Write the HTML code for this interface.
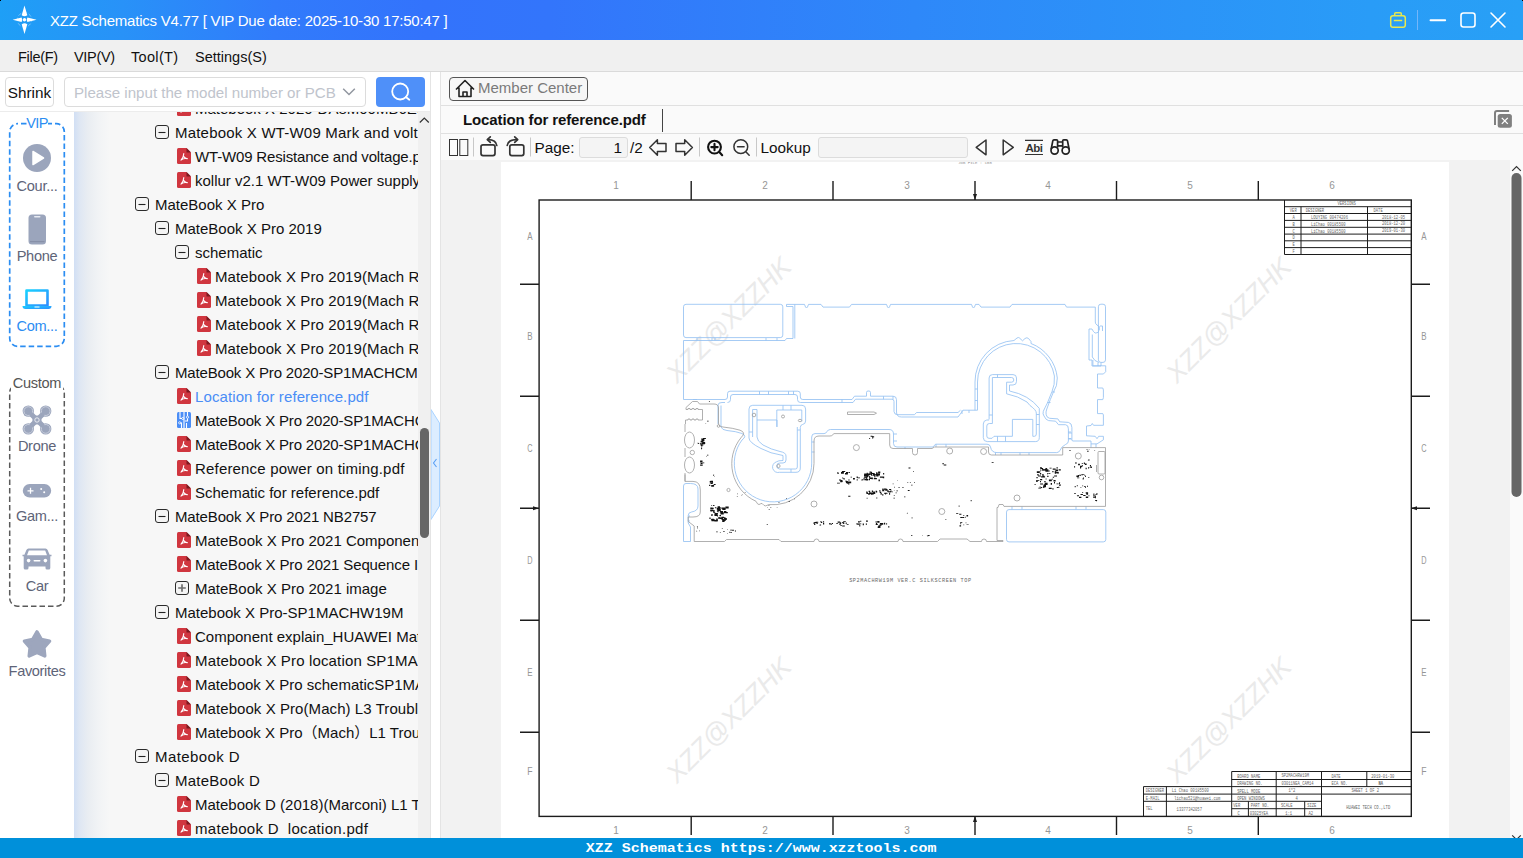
<!DOCTYPE html>
<html lang="en">
<head>
<meta charset="utf-8">
<title>XZZ Schematics</title>
<style>
*{box-sizing:border-box;margin:0;padding:0}
html,body{width:1523px;height:858px;overflow:hidden;background:#f0f0f0}
body{font-family:"Liberation Sans","Noto Sans CJK SC",sans-serif;color:#111;position:relative}
.abs{position:absolute}
#title{position:absolute;left:0;top:0;width:1523px;height:40px;background:linear-gradient(90deg,#1e9ff6 0%,#2892f8 8%,#317bfb 18%,#3373fc 28%,#3375fb 36%,#2e88f9 60%,#299cf7 90%,#28a0f6 100%)}
#title .cap{position:absolute;left:50px;top:11.500px;letter-spacing:-.23px;font-size:15px;color:#fff;white-space:nowrap;line-height:18px}
#menu{position:absolute;left:0;top:40px;width:1523px;height:32px;background:#f0f0f0;border-bottom:1px solid #dadada}
#menu span{position:absolute;top:8px;font-size:14.5px;line-height:18px;color:#111;white-space:nowrap}
#left{position:absolute;left:0;top:72px;width:430px;height:766px;background:#fff}
#lbar{position:absolute;left:0;top:0;width:430px;height:40px;background:#fff;border-bottom:1px solid #ececec}
#shrink{position:absolute;left:5px;top:5px;width:49px;height:30px;border:1px solid #dcdcdc;border-radius:4px;background:#fff;font-size:15.3px;line-height:30px;text-align:center;color:#111}
#inp{position:absolute;left:64px;top:5px;width:302px;height:30px;border:1px solid #dcdcdc;border-radius:4px;background:#fff;font-size:15.1px;line-height:30px;color:#c0c4cc;padding-left:9px;white-space:nowrap;overflow:hidden}
#sbtn{position:absolute;left:376px;top:5px;width:49px;height:30px;border-radius:4px;background:#4f90f9}
#side{position:absolute;left:0;top:40px;width:74px;height:726px;background:#fff}
.grp{position:absolute;left:9px;width:56px;border-radius:9px}
.sl{position:absolute;left:0;width:74px;text-align:center;font-size:14.600px;line-height:18px;color:#5e6478;white-space:nowrap;letter-spacing:-.3px}
#tree{position:absolute;left:74px;top:40px;width:344px;height:726px;overflow:hidden;background:linear-gradient(90deg,#d1dff4 0px,#dfe7f3 6px,#e9edf2 14px,#f1f3f5 24px,#f7f7f7 36px)}
.row{position:absolute;left:0;width:344px;height:24px;white-space:nowrap}
.row .i{position:absolute;line-height:0}
.row .t{position:absolute;top:4px;font-size:15px;line-height:18px;color:#111;white-space:nowrap}
.row.sel .t{color:#4a8df6}
#tsb{position:absolute;left:418px;top:40px;width:12px;height:726px;background:#f0f0f0}
#split{position:absolute;z-index:2;left:430px;top:72px;width:11px;height:766px;background:#fff;border-left:1px solid #e4e4e4;border-right:1px solid #e4e4e4}
#right{position:absolute;left:440px;top:72px;width:1083px;height:766px;background:#fafafa}
#mc{position:absolute;left:0;top:0;width:1083px;height:34px;background:#fafafa;border-bottom:1px solid #e0e0e0}
#mcb{position:absolute;left:9px;top:5px;width:139px;height:24px;border:1px solid #555;border-radius:4px;background:#f6f6f6}
#mcb span{position:absolute;left:28px;top:.500px;font-size:15px;line-height:18px;color:#7a7a7a;white-space:nowrap}
#tabs{position:absolute;left:0;top:34px;width:1083px;height:28px;background:#fafafa;border-bottom:1px solid #e0e0e0}
#tabs .tt{position:absolute;left:23px;top:4px;letter-spacing:-.12px;font-size:15px;line-height:19px;font-weight:bold;color:#111;white-space:nowrap}
#tb{position:absolute;left:0;top:62px;width:1083px;height:26px;background:#fafafa}
#tb .tx{position:absolute;top:5px;font-size:15.3px;line-height:18px;color:#111;white-space:nowrap}
#tb .sep{position:absolute;top:3px;width:1px;height:20px;background:#cfcfcf}
#tb .box{position:absolute;border:1px solid #dcdcdc;border-radius:3px;background:#f4f4f4}
#doc{position:absolute;left:0;top:88px;width:1083px;height:678px;background:#f2f2f2;overflow:hidden}
#page{position:absolute;left:61px;top:2px;width:948px;height:676px;background:#fff}
#dsb{position:absolute;left:1070px;top:0;width:13px;height:678px;background:#fafafa}
#status{position:absolute;left:0;top:838px;width:1523px;height:20px;background:#0090da;color:#fff;font-family:"Liberation Mono",monospace;font-weight:bold;font-size:13.7px;line-height:22.400px;overflow:hidden;text-align:center;white-space:nowrap}
#status span{display:inline-block;transform:scaleX(1.095);transform-origin:50% 50%}
</style>
</head>
<body>
<div id="title">
<svg class="abs" style="left:11px;top:5px" width="28" height="30" viewBox="0 0 28 30"><g fill="#fff"><path d="M13.500 .600L16.300 10.300Q13.500 12.400 10.700 10.300Z"/><path d="M13.500 29L16.300 19.300Q13.500 17.200 10.700 19.300Z"/><path d="M1.600 14.800L10.600 12.600Q11.900 14.800 10.600 17Z"/><path d="M25.600 14.800L16.400 12.600Q15.100 14.800 16.400 17Z"/><circle cx="13.500" cy="14.800" r="1.700"/></g><circle cx="13.500" cy="14.800" r="7.200" fill="none" stroke="#fff" stroke-opacity=".4" stroke-width=".9" stroke-dasharray="3.500 2.200" stroke-dashoffset="1.700"/></svg>
<div class="cap">XZZ Schematics V4.77 [ VIP Due date: 2025-10-30 17:50:47 ]</div>
<svg class="abs" style="left:1385px;top:8px" width="130" height="24" viewBox="0 0 130 24"><g fill="none" stroke="#e8e84e" stroke-width="1.500"><rect x="5.700" y="7.700" width="14.600" height="11.600" rx="2.300"/><path d="M9.700 7.700V5.800Q9.700 4.800 10.700 4.800H15.300Q16.300 4.800 16.300 5.800V7.700M8.800 12.500H17.200"/></g><path d="M32.500 2V22" stroke="#74b6fa" stroke-width="1"/><g fill="none" stroke="#fff" stroke-width="1.6" stroke-linecap="round"><path d="M45.500 12.200H60.200" stroke-width="1.900"/><rect x="76" y="5" width="14" height="14" rx="2.5"/><path d="M106 5L120 19M120 5L106 19"/></g></svg>
</div>
<div id="menu"><span style="left:18px;letter-spacing:-.3px">File(F)</span><span style="left:74px;letter-spacing:-.33px">VIP(V)</span><span style="left:131px;letter-spacing:.33px">Tool(T)</span><span style="left:195px">Settings(S)</span></div>

<div id="left">
<div id="lbar">
<div id="shrink">Shrink</div>
<div id="inp">Please input the model number or PCB
<svg class="abs" style="left:277px;top:9px" width="14" height="10" viewBox="0 0 14 10"><path d="M1.200 1.800L7 7.500L12.800 1.800" fill="none" stroke="#9297a0" stroke-width="1.500"/></svg></div>
<div id="sbtn"><svg class="abs" style="left:12px;top:3px" width="26" height="24" viewBox="0 0 26 24"><circle cx="12.200" cy="11.500" r="8" fill="none" stroke="#fff" stroke-width="1.800"/><path d="M17.800 17L21.300 19.800" stroke="#fff" stroke-width="1.800" stroke-linecap="round"/></svg></div>
</div>
<div id="side">
<svg class="abs" style="left:8px;top:10px" width="58" height="226" viewBox="0 0 58 226"><rect x="1.7" y="1.7" width="54.6" height="222.600" rx="8" fill="none" stroke="#2b8df2" stroke-width="1.700" stroke-dasharray="5.500 3" stroke-dashoffset="-3.300"/></svg>
<div class="abs" style="left:27px;top:2px;width:20.500px;height:18px;background:#fff"></div>
<div class="sl" style="top:2px;color:#2b8df2;font-size:14.5px;letter-spacing:-.6px">VIP</div>
<svg class="abs" style="left:22px;top:31px" width="30" height="30" viewBox="0 0 30 30"><circle cx="15" cy="15" r="14" fill="#9ba5bc"/><path d="M11 8.5L21.5 15L11 21.5Z" fill="#fff" stroke="#fff" stroke-width="1.5" stroke-linejoin="round"/></svg>
<div class="sl" style="top:65px">Cour...</div>
<svg class="abs" style="left:28px;top:102px" width="19" height="32" viewBox="0 0 19 32"><rect x=".5" y=".5" width="17.5" height="30" rx="3.5" fill="#9ba5bc"/><rect x="6" y="2" width="6.5" height="1.6" rx=".8" fill="#e8ebf2"/><rect x="2" y="27" width="14.5" height="1.2" fill="#8790a8"/></svg>
<div class="sl" style="top:135px">Phone</div>
<svg class="abs" style="left:21px;top:175px" width="32" height="24" viewBox="0 0 32 24"><defs><linearGradient id="lg" x1="0" y1="0" x2="1" y2="1"><stop offset="0" stop-color="#18d0ff"/><stop offset="1" stop-color="#2f8dff"/></linearGradient></defs><path d="M5.5 3.5H26.5V18.5H5.5Z" fill="none" stroke="url(#lg)" stroke-width="2.6" stroke-linejoin="round"/><path d="M1.5 19H30.5Q30.5 22 27.5 22H4.5Q1.5 22 1.5 19Z" fill="url(#lg)"/><rect x="13.5" y="19.5" width="5" height="1" fill="#fff"/></svg>
<div class="sl" style="top:205px;color:#2b8df2">Com...</div>

<svg class="abs" style="left:8px;top:271px" width="58" height="225" viewBox="0 0 58 225"><rect x="1.7" y="1.7" width="54.6" height="221.600" rx="8" fill="none" stroke="#5a5a5a" stroke-width="1.5" stroke-dasharray="5.500 3"/></svg>
<div class="abs" style="left:11px;top:262px;width:52px;height:18px;background:#fff"></div>
<div class="sl" style="top:262px;color:#555">Custom</div>
<svg class="abs" style="left:21px;top:291.500px" width="32" height="32" viewBox="0 0 32 32"><g fill="#9ba5bc"><path d="M7.500 7.500L24.500 24.500M24.500 7.500L7.500 24.500" stroke="#9ba5bc" stroke-width="5" stroke-linecap="round"/><circle cx="16" cy="16" r="4.600"/><circle cx="7.300" cy="7.100" r="5.700"/><circle cx="24.700" cy="7.100" r="5.700"/><circle cx="7.300" cy="24.900" r="5.700"/><circle cx="24.700" cy="24.900" r="5.700"/></g><g fill="none" stroke="#cdd3e0" stroke-width=".9"><circle cx="16" cy="16" r="2.200" stroke="#eef0f5"/><path d="M11.500 8.500A4.400 4.400 0 1 0 8.700 11.300M20.500 8.500A4.400 4.400 0 1 1 23.300 11.300M11.500 23.500A4.400 4.400 0 1 1 8.700 20.700M20.500 23.500A4.400 4.400 0 1 0 23.300 20.700"/></g></svg>
<div class="sl" style="top:325px">Drone</div>
<svg class="abs" style="left:22px;top:371px" width="30" height="16" viewBox="0 0 30 16"><rect x=".8" y="1" width="28.4" height="13.6" rx="6.8" fill="#9ba5bc"/><path d="M5.5 7.8H11.5M8.5 4.8V10.8" stroke="#fff" stroke-width="1.3"/><circle cx="19.2" cy="6" r="1" fill="#fff"/><circle cx="22.2" cy="9.2" r="1" fill="#fff"/></svg>
<div class="sl" style="top:395px">Gam...</div>
<svg class="abs" style="left:22px;top:435px" width="30" height="24" viewBox="0 0 30 24"><path d="M6.5 1.5H23.5Q25 1.5 25.6 3L27.6 7.8H29.5V9.2H28.3V21Q28.3 22.6 26.8 22.6H25Q23.5 22.6 23.5 21V19.4H6.5V21Q6.5 22.6 5 22.6H3.2Q1.7 22.6 1.7 21V9.2H.5V7.8H2.4L4.4 3Q5 1.5 6.5 1.5Z" fill="#9ba5bc"/><path d="M6.8 3.6H23.2L25 8.2H5Z" fill="#fff"/><circle cx="6.6" cy="13.6" r="1.8" fill="#fff"/><circle cx="23.4" cy="13.6" r="1.8" fill="#fff"/><rect x="11.5" y="13" width="7" height="1.6" rx=".8" fill="#fff"/></svg>
<div class="sl" style="top:465px">Car</div>
<svg class="abs" style="left:21px;top:516px" width="32" height="32" viewBox="0 0 32 32"><path d="M16.0 3.9L20.3 11.3L28.6 13.1L22.9 19.5L23.8 28.0L16.0 24.5L8.2 28.0L9.1 19.5L3.4 13.1L11.7 11.3Z" fill="#9da6bd" stroke="#9da6bd" stroke-width="3.400" stroke-linejoin="round"/></svg>
<div class="sl" style="top:550px;letter-spacing:-.35px">Favorites</div>

</div>
<div id="tree">
<div class="row " style="top:-16px"><span class="i" style="left:103px;top:4px"><svg class="ic" width="14" height="16" viewBox="0 0 14 16"><path d="M1.5 0H9.5L14 4.5V14.5Q14 16 12.5 16H1.5Q0 16 0 14.5V1.5Q0 0 1.5 0Z" fill="#d0363f"/><path d="M9.5 0L14 4.5H9.5Z" fill="#7c1a20"/><path d="M4 12.2C5.6 10.6 6.6 8.4 6.8 5.6M6.8 8.6C7.6 9.8 8.8 10.6 10.4 10.8M4.2 11.9C6 10.7 8 10.2 10.2 10.6" stroke="#fff" stroke-width="1.1" fill="none" stroke-linecap="round"/></svg></span><span class="t" style="left:121px">Matebook X 2020-DA8M00MB6E0 L1</span></div>
<div class="row " style="top:8px"><span class="i" style="left:81px;top:5px"><svg class="ex" width="14" height="14" viewBox="0 0 14 14"><rect x=".5" y=".5" width="13" height="13" rx="2.5" fill="#f4f4f4" stroke="#2b2b2b"/><path d="M3.500 7.500H10.500" stroke="#222" stroke-width="1.100"/></svg></span><span class="t" style="left:101px;letter-spacing:0.2px">Matebook X WT-W09 Mark and voltage</span></div>
<div class="row " style="top:32px"><span class="i" style="left:103px;top:4px"><svg class="ic" width="14" height="16" viewBox="0 0 14 16"><path d="M1.5 0H9.5L14 4.5V14.5Q14 16 12.5 16H1.5Q0 16 0 14.5V1.5Q0 0 1.5 0Z" fill="#d0363f"/><path d="M9.5 0L14 4.5H9.5Z" fill="#7c1a20"/><path d="M4 12.2C5.6 10.6 6.6 8.4 6.8 5.6M6.8 8.6C7.6 9.8 8.8 10.6 10.4 10.8M4.2 11.9C6 10.7 8 10.2 10.2 10.6" stroke="#fff" stroke-width="1.1" fill="none" stroke-linecap="round"/></svg></span><span class="t" style="left:121px;letter-spacing:-0.17px">WT-W09 Resistance and voltage.pdf</span></div>
<div class="row " style="top:56px"><span class="i" style="left:103px;top:4px"><svg class="ic" width="14" height="16" viewBox="0 0 14 16"><path d="M1.5 0H9.5L14 4.5V14.5Q14 16 12.5 16H1.5Q0 16 0 14.5V1.5Q0 0 1.5 0Z" fill="#d0363f"/><path d="M9.5 0L14 4.5H9.5Z" fill="#7c1a20"/><path d="M4 12.2C5.6 10.6 6.6 8.4 6.8 5.6M6.8 8.6C7.6 9.8 8.8 10.6 10.4 10.8M4.2 11.9C6 10.7 8 10.2 10.2 10.6" stroke="#fff" stroke-width="1.1" fill="none" stroke-linecap="round"/></svg></span><span class="t" style="left:121px">kollur v2.1 WT-W09 Power supply timing</span></div>
<div class="row " style="top:80px"><span class="i" style="left:61px;top:5px"><svg class="ex" width="14" height="14" viewBox="0 0 14 14"><rect x=".5" y=".5" width="13" height="13" rx="2.5" fill="#f4f4f4" stroke="#2b2b2b"/><path d="M3.500 7.500H10.500" stroke="#222" stroke-width="1.100"/></svg></span><span class="t" style="left:81px">MateBook X Pro</span></div>
<div class="row " style="top:104px"><span class="i" style="left:81px;top:5px"><svg class="ex" width="14" height="14" viewBox="0 0 14 14"><rect x=".5" y=".5" width="13" height="13" rx="2.5" fill="#f4f4f4" stroke="#2b2b2b"/><path d="M3.500 7.500H10.500" stroke="#222" stroke-width="1.100"/></svg></span><span class="t" style="left:101px">MateBook X Pro 2019</span></div>
<div class="row " style="top:128px"><span class="i" style="left:101px;top:5px"><svg class="ex" width="14" height="14" viewBox="0 0 14 14"><rect x=".5" y=".5" width="13" height="13" rx="2.5" fill="#f4f4f4" stroke="#2b2b2b"/><path d="M3.500 7.500H10.500" stroke="#222" stroke-width="1.100"/></svg></span><span class="t" style="left:121px">schematic</span></div>
<div class="row " style="top:152px"><span class="i" style="left:123px;top:4px"><svg class="ic" width="14" height="16" viewBox="0 0 14 16"><path d="M1.5 0H9.5L14 4.5V14.5Q14 16 12.5 16H1.5Q0 16 0 14.5V1.5Q0 0 1.5 0Z" fill="#d0363f"/><path d="M9.5 0L14 4.5H9.5Z" fill="#7c1a20"/><path d="M4 12.2C5.6 10.6 6.6 8.4 6.8 5.6M6.8 8.6C7.6 9.8 8.8 10.6 10.4 10.8M4.2 11.9C6 10.7 8 10.2 10.2 10.6" stroke="#fff" stroke-width="1.1" fill="none" stroke-linecap="round"/></svg></span><span class="t" style="left:141px;letter-spacing:0.1px">Matebook X Pro 2019(Mach R) L1</span></div>
<div class="row " style="top:176px"><span class="i" style="left:123px;top:4px"><svg class="ic" width="14" height="16" viewBox="0 0 14 16"><path d="M1.5 0H9.5L14 4.5V14.5Q14 16 12.5 16H1.5Q0 16 0 14.5V1.5Q0 0 1.5 0Z" fill="#d0363f"/><path d="M9.5 0L14 4.5H9.5Z" fill="#7c1a20"/><path d="M4 12.2C5.6 10.6 6.6 8.4 6.8 5.6M6.8 8.6C7.6 9.8 8.8 10.6 10.4 10.8M4.2 11.9C6 10.7 8 10.2 10.2 10.6" stroke="#fff" stroke-width="1.1" fill="none" stroke-linecap="round"/></svg></span><span class="t" style="left:141px;letter-spacing:0.1px">Matebook X Pro 2019(Mach R) L2</span></div>
<div class="row " style="top:200px"><span class="i" style="left:123px;top:4px"><svg class="ic" width="14" height="16" viewBox="0 0 14 16"><path d="M1.5 0H9.5L14 4.5V14.5Q14 16 12.5 16H1.5Q0 16 0 14.5V1.5Q0 0 1.5 0Z" fill="#d0363f"/><path d="M9.5 0L14 4.5H9.5Z" fill="#7c1a20"/><path d="M4 12.2C5.6 10.6 6.6 8.4 6.8 5.6M6.8 8.6C7.6 9.8 8.8 10.6 10.4 10.8M4.2 11.9C6 10.7 8 10.2 10.2 10.6" stroke="#fff" stroke-width="1.1" fill="none" stroke-linecap="round"/></svg></span><span class="t" style="left:141px;letter-spacing:0.1px">Matebook X Pro 2019(Mach R) L3</span></div>
<div class="row " style="top:224px"><span class="i" style="left:123px;top:4px"><svg class="ic" width="14" height="16" viewBox="0 0 14 16"><path d="M1.5 0H9.5L14 4.5V14.5Q14 16 12.5 16H1.5Q0 16 0 14.5V1.5Q0 0 1.5 0Z" fill="#d0363f"/><path d="M9.5 0L14 4.5H9.5Z" fill="#7c1a20"/><path d="M4 12.2C5.6 10.6 6.6 8.4 6.8 5.6M6.8 8.6C7.6 9.8 8.8 10.6 10.4 10.8M4.2 11.9C6 10.7 8 10.2 10.2 10.6" stroke="#fff" stroke-width="1.1" fill="none" stroke-linecap="round"/></svg></span><span class="t" style="left:141px;letter-spacing:0.1px">Matebook X Pro 2019(Mach R) L4</span></div>
<div class="row " style="top:248px"><span class="i" style="left:81px;top:5px"><svg class="ex" width="14" height="14" viewBox="0 0 14 14"><rect x=".5" y=".5" width="13" height="13" rx="2.5" fill="#f4f4f4" stroke="#2b2b2b"/><path d="M3.500 7.500H10.500" stroke="#222" stroke-width="1.100"/></svg></span><span class="t" style="left:101px;letter-spacing:-0.17px">MateBook X Pro 2020-SP1MACHCM</span></div>
<div class="row sel" style="top:272px"><span class="i" style="left:103px;top:4px"><svg class="ic" width="14" height="16" viewBox="0 0 14 16"><path d="M1.5 0H9.5L14 4.5V14.5Q14 16 12.5 16H1.5Q0 16 0 14.5V1.5Q0 0 1.5 0Z" fill="#d0363f"/><path d="M9.5 0L14 4.5H9.5Z" fill="#7c1a20"/><path d="M4 12.2C5.6 10.6 6.6 8.4 6.8 5.6M6.8 8.6C7.6 9.8 8.8 10.6 10.4 10.8M4.2 11.9C6 10.7 8 10.2 10.2 10.6" stroke="#fff" stroke-width="1.1" fill="none" stroke-linecap="round"/></svg></span><span class="t" style="left:121px;letter-spacing:0.1px">Location for reference.pdf</span></div>
<div class="row " style="top:296px"><span class="i" style="left:103px;top:4px"><svg class="ic" width="14" height="16" viewBox="0 0 14 16"><rect width="14" height="16" rx="1.5" fill="#4a8df6"/><path d="M3 0V6.5H5M7 0V16M10.5 0V4M10.5 6.5V9H8M4.5 16V11H3.5M9.5 16V11" stroke="#fff" stroke-width="1.1" fill="none"/><circle cx="10.5" cy="5.2" r="1.1" fill="none" stroke="#fff" stroke-width=".8"/><circle cx="5.8" cy="6.5" r="1.1" fill="none" stroke="#fff" stroke-width=".8"/><circle cx="2.7" cy="10.8" r="1.1" fill="none" stroke="#fff" stroke-width=".8"/></svg></span><span class="t" style="left:121px;letter-spacing:-0.17px">MateBook X Pro 2020-SP1MACHCM</span></div>
<div class="row " style="top:320px"><span class="i" style="left:103px;top:4px"><svg class="ic" width="14" height="16" viewBox="0 0 14 16"><path d="M1.5 0H9.5L14 4.5V14.5Q14 16 12.5 16H1.5Q0 16 0 14.5V1.5Q0 0 1.5 0Z" fill="#d0363f"/><path d="M9.5 0L14 4.5H9.5Z" fill="#7c1a20"/><path d="M4 12.2C5.6 10.6 6.6 8.4 6.8 5.6M6.8 8.6C7.6 9.8 8.8 10.6 10.4 10.8M4.2 11.9C6 10.7 8 10.2 10.2 10.6" stroke="#fff" stroke-width="1.1" fill="none" stroke-linecap="round"/></svg></span><span class="t" style="left:121px;letter-spacing:-0.17px">MateBook X Pro 2020-SP1MACHCM</span></div>
<div class="row " style="top:344px"><span class="i" style="left:103px;top:4px"><svg class="ic" width="14" height="16" viewBox="0 0 14 16"><path d="M1.5 0H9.5L14 4.5V14.5Q14 16 12.5 16H1.5Q0 16 0 14.5V1.5Q0 0 1.5 0Z" fill="#d0363f"/><path d="M9.5 0L14 4.5H9.5Z" fill="#7c1a20"/><path d="M4 12.2C5.6 10.6 6.6 8.4 6.8 5.6M6.8 8.6C7.6 9.8 8.8 10.6 10.4 10.8M4.2 11.9C6 10.7 8 10.2 10.2 10.6" stroke="#fff" stroke-width="1.1" fill="none" stroke-linecap="round"/></svg></span><span class="t" style="left:121px;letter-spacing:0.18px">Reference power on timing.pdf</span></div>
<div class="row " style="top:368px"><span class="i" style="left:103px;top:4px"><svg class="ic" width="14" height="16" viewBox="0 0 14 16"><path d="M1.5 0H9.5L14 4.5V14.5Q14 16 12.5 16H1.5Q0 16 0 14.5V1.5Q0 0 1.5 0Z" fill="#d0363f"/><path d="M9.5 0L14 4.5H9.5Z" fill="#7c1a20"/><path d="M4 12.2C5.6 10.6 6.6 8.4 6.8 5.6M6.8 8.6C7.6 9.8 8.8 10.6 10.4 10.8M4.2 11.9C6 10.7 8 10.2 10.2 10.6" stroke="#fff" stroke-width="1.1" fill="none" stroke-linecap="round"/></svg></span><span class="t" style="left:121px">Schematic for reference.pdf</span></div>
<div class="row " style="top:392px"><span class="i" style="left:81px;top:5px"><svg class="ex" width="14" height="14" viewBox="0 0 14 14"><rect x=".5" y=".5" width="13" height="13" rx="2.5" fill="#f4f4f4" stroke="#2b2b2b"/><path d="M3.500 7.500H10.500" stroke="#222" stroke-width="1.100"/></svg></span><span class="t" style="left:101px;letter-spacing:-0.14px">MateBook X Pro 2021 NB2757</span></div>
<div class="row " style="top:416px"><span class="i" style="left:103px;top:4px"><svg class="ic" width="14" height="16" viewBox="0 0 14 16"><path d="M1.5 0H9.5L14 4.5V14.5Q14 16 12.5 16H1.5Q0 16 0 14.5V1.5Q0 0 1.5 0Z" fill="#d0363f"/><path d="M9.5 0L14 4.5H9.5Z" fill="#7c1a20"/><path d="M4 12.2C5.6 10.6 6.6 8.4 6.8 5.6M6.8 8.6C7.6 9.8 8.8 10.6 10.4 10.8M4.2 11.9C6 10.7 8 10.2 10.2 10.6" stroke="#fff" stroke-width="1.1" fill="none" stroke-linecap="round"/></svg></span><span class="t" style="left:121px">MateBook X Pro 2021 Component</span></div>
<div class="row " style="top:440px"><span class="i" style="left:103px;top:4px"><svg class="ic" width="14" height="16" viewBox="0 0 14 16"><path d="M1.5 0H9.5L14 4.5V14.5Q14 16 12.5 16H1.5Q0 16 0 14.5V1.5Q0 0 1.5 0Z" fill="#d0363f"/><path d="M9.5 0L14 4.5H9.5Z" fill="#7c1a20"/><path d="M4 12.2C5.6 10.6 6.6 8.4 6.8 5.6M6.8 8.6C7.6 9.8 8.8 10.6 10.4 10.8M4.2 11.9C6 10.7 8 10.2 10.2 10.6" stroke="#fff" stroke-width="1.1" fill="none" stroke-linecap="round"/></svg></span><span class="t" style="left:121px;letter-spacing:-0.13px">MateBook X Pro 2021 Sequence IC</span></div>
<div class="row " style="top:464px"><span class="i" style="left:101px;top:5px"><svg class="ex" width="14" height="14" viewBox="0 0 14 14"><rect x=".5" y=".5" width="13" height="13" rx="2.5" fill="#f4f4f4" stroke="#2b2b2b"/><path d="M3.200 7H10.800M7 3.200V10.800" stroke="#6e6e6e" stroke-width="1.700"/></svg></span><span class="t" style="left:121px">MateBook X Pro 2021 image</span></div>
<div class="row " style="top:488px"><span class="i" style="left:81px;top:5px"><svg class="ex" width="14" height="14" viewBox="0 0 14 14"><rect x=".5" y=".5" width="13" height="13" rx="2.5" fill="#f4f4f4" stroke="#2b2b2b"/><path d="M3.500 7.500H10.500" stroke="#222" stroke-width="1.100"/></svg></span><span class="t" style="left:101px">Matebook X Pro-SP1MACHW19M</span></div>
<div class="row " style="top:512px"><span class="i" style="left:103px;top:4px"><svg class="ic" width="14" height="16" viewBox="0 0 14 16"><path d="M1.5 0H9.5L14 4.5V14.5Q14 16 12.5 16H1.5Q0 16 0 14.5V1.5Q0 0 1.5 0Z" fill="#d0363f"/><path d="M9.5 0L14 4.5H9.5Z" fill="#7c1a20"/><path d="M4 12.2C5.6 10.6 6.6 8.4 6.8 5.6M6.8 8.6C7.6 9.8 8.8 10.6 10.4 10.8M4.2 11.9C6 10.7 8 10.2 10.2 10.6" stroke="#fff" stroke-width="1.1" fill="none" stroke-linecap="round"/></svg></span><span class="t" style="left:121px">Component explain_HUAWEI Mate</span></div>
<div class="row " style="top:536px"><span class="i" style="left:103px;top:4px"><svg class="ic" width="14" height="16" viewBox="0 0 14 16"><path d="M1.5 0H9.5L14 4.5V14.5Q14 16 12.5 16H1.5Q0 16 0 14.5V1.5Q0 0 1.5 0Z" fill="#d0363f"/><path d="M9.5 0L14 4.5H9.5Z" fill="#7c1a20"/><path d="M4 12.2C5.6 10.6 6.6 8.4 6.8 5.6M6.8 8.6C7.6 9.8 8.8 10.6 10.4 10.8M4.2 11.9C6 10.7 8 10.2 10.2 10.6" stroke="#fff" stroke-width="1.1" fill="none" stroke-linecap="round"/></svg></span><span class="t" style="left:121px;letter-spacing:0.15px">Matebook X Pro location SP1MAC</span></div>
<div class="row " style="top:560px"><span class="i" style="left:103px;top:4px"><svg class="ic" width="14" height="16" viewBox="0 0 14 16"><path d="M1.5 0H9.5L14 4.5V14.5Q14 16 12.5 16H1.5Q0 16 0 14.5V1.5Q0 0 1.5 0Z" fill="#d0363f"/><path d="M9.5 0L14 4.5H9.5Z" fill="#7c1a20"/><path d="M4 12.2C5.6 10.6 6.6 8.4 6.8 5.6M6.8 8.6C7.6 9.8 8.8 10.6 10.4 10.8M4.2 11.9C6 10.7 8 10.2 10.2 10.6" stroke="#fff" stroke-width="1.1" fill="none" stroke-linecap="round"/></svg></span><span class="t" style="left:121px">Matebook X Pro schematicSP1MA</span></div>
<div class="row " style="top:584px"><span class="i" style="left:103px;top:4px"><svg class="ic" width="14" height="16" viewBox="0 0 14 16"><path d="M1.5 0H9.5L14 4.5V14.5Q14 16 12.5 16H1.5Q0 16 0 14.5V1.5Q0 0 1.5 0Z" fill="#d0363f"/><path d="M9.5 0L14 4.5H9.5Z" fill="#7c1a20"/><path d="M4 12.2C5.6 10.6 6.6 8.4 6.8 5.6M6.8 8.6C7.6 9.8 8.8 10.6 10.4 10.8M4.2 11.9C6 10.7 8 10.2 10.2 10.6" stroke="#fff" stroke-width="1.1" fill="none" stroke-linecap="round"/></svg></span><span class="t" style="left:121px;letter-spacing:0.07px">Matebook X Pro(Mach) L3 Trouble</span></div>
<div class="row " style="top:608px"><span class="i" style="left:103px;top:4px"><svg class="ic" width="14" height="16" viewBox="0 0 14 16"><path d="M1.5 0H9.5L14 4.5V14.5Q14 16 12.5 16H1.5Q0 16 0 14.5V1.5Q0 0 1.5 0Z" fill="#d0363f"/><path d="M9.5 0L14 4.5H9.5Z" fill="#7c1a20"/><path d="M4 12.2C5.6 10.6 6.6 8.4 6.8 5.6M6.8 8.6C7.6 9.8 8.8 10.6 10.4 10.8M4.2 11.9C6 10.7 8 10.2 10.2 10.6" stroke="#fff" stroke-width="1.1" fill="none" stroke-linecap="round"/></svg></span><span class="t" style="left:121px">Matebook X Pro（Mach）L1 Trou</span></div>
<div class="row " style="top:632px"><span class="i" style="left:61px;top:5px"><svg class="ex" width="14" height="14" viewBox="0 0 14 14"><rect x=".5" y=".5" width="13" height="13" rx="2.5" fill="#f4f4f4" stroke="#2b2b2b"/><path d="M3.500 7.500H10.500" stroke="#222" stroke-width="1.100"/></svg></span><span class="t" style="left:81px;letter-spacing:0.4px">Matebook D</span></div>
<div class="row " style="top:656px"><span class="i" style="left:81px;top:5px"><svg class="ex" width="14" height="14" viewBox="0 0 14 14"><rect x=".5" y=".5" width="13" height="13" rx="2.5" fill="#f4f4f4" stroke="#2b2b2b"/><path d="M3.500 7.500H10.500" stroke="#222" stroke-width="1.100"/></svg></span><span class="t" style="left:101px;letter-spacing:0.25px">MateBook D</span></div>
<div class="row " style="top:680px"><span class="i" style="left:103px;top:4px"><svg class="ic" width="14" height="16" viewBox="0 0 14 16"><path d="M1.5 0H9.5L14 4.5V14.5Q14 16 12.5 16H1.5Q0 16 0 14.5V1.5Q0 0 1.5 0Z" fill="#d0363f"/><path d="M9.5 0L14 4.5H9.5Z" fill="#7c1a20"/><path d="M4 12.2C5.6 10.6 6.6 8.4 6.8 5.6M6.8 8.6C7.6 9.8 8.8 10.6 10.4 10.8M4.2 11.9C6 10.7 8 10.2 10.2 10.6" stroke="#fff" stroke-width="1.1" fill="none" stroke-linecap="round"/></svg></span><span class="t" style="left:121px">Matebook D (2018)(Marconi) L1 T</span></div>
<div class="row " style="top:704px"><span class="i" style="left:103px;top:4px"><svg class="ic" width="14" height="16" viewBox="0 0 14 16"><path d="M1.5 0H9.5L14 4.5V14.5Q14 16 12.5 16H1.5Q0 16 0 14.5V1.5Q0 0 1.5 0Z" fill="#d0363f"/><path d="M9.5 0L14 4.5H9.5Z" fill="#7c1a20"/><path d="M4 12.2C5.6 10.6 6.6 8.4 6.8 5.6M6.8 8.6C7.6 9.8 8.8 10.6 10.4 10.8M4.2 11.9C6 10.7 8 10.2 10.2 10.6" stroke="#fff" stroke-width="1.1" fill="none" stroke-linecap="round"/></svg></span><span class="t" style="left:121px;letter-spacing:0.3px">matebook D  location.pdf</span></div>
</div>
<div id="tsb">
<svg class="abs" style="left:0;top:0" width="12" height="726" viewBox="0 0 12 726"><path d="M1.800 10.500L6.300 6L10.800 10.500" fill="none" stroke="#333" stroke-width="1.200"/><rect x="2" y="316" width="9" height="110" rx="4.500" fill="#666"/></svg>
</div>
</div>
<div id="split"><svg class="abs" style="left:0px;top:337px" width="9" height="112" viewBox="0 0 9 112"><path d="M0 .5L8.500 14V97L0 110.500Z" fill="#dcedff" stroke="#a9d3ff" stroke-width="1"/><path d="M5.500 50L2.500 54L5.500 58" fill="none" stroke="#5aa0f5" stroke-width="1.100"/></svg></div>

<div id="right">
<div id="mc"><div id="mcb"><svg class="abs" style="left:4px;top:0px" width="22" height="20" viewBox="0 0 22 20"><path d="M2 11.500L11 2.500L20 11.500M5 9.500V18.500H17V9.500M9 18.500V14H13V18.500" fill="none" stroke="#222" stroke-width="1.6" stroke-linejoin="round"/></svg><span>Member Center</span></div></div>
<div id="tabs"><div class="tt">Location for reference.pdf</div><div class="abs" style="left:221.5px;top:3px;width:1px;height:23px;background:#444"></div>
<svg class="abs" style="left:1052px;top:2px" width="24" height="24" viewBox="1492 108 24 24"><path d="M1495 125V113Q1495 111 1497 111H1509.100" fill="none" stroke="#808080" stroke-width="2"/><rect x="1497.700" y="114" width="14.200" height="13.800" rx="2.500" fill="#808080"/><path d="M1501.800 117.900L1507.800 123.900M1507.800 117.900L1501.800 123.900" stroke="#fff" stroke-width="1.300"/></svg></div>
<div id="tb">
<svg class="abs" style="left:0;top:0" width="1083" height="26" viewBox="440 134 1083 26">
<g fill="none" stroke="#333" stroke-width="1"><rect x="449.500" y="139.500" width="8" height="16"/><rect x="459.800" y="139.500" width="8" height="16"/></g>
<g stroke="#c8c8c8" stroke-width="1"><path d="M473.500 137.500V156.500M530.500 137.500V156.500M699.500 137.500V156.500M756.500 137.500V156.500"/></g>
<g fill="none" stroke="#333" stroke-width="1.7" stroke-linejoin="round" stroke-linecap="round">
<rect x="481" y="144.800" width="14" height="10.800" rx="2"/><path d="M496.800 145.500Q496 139.600 488 139.600"/><path d="M490.300 136.800L487.300 139.600L490.300 142.400"/>
<rect x="509.800" y="144.800" width="14" height="10.800" rx="2"/><path d="M507.200 145.500Q508 139.600 517 139.600"/><path d="M514.700 136.800L517.700 139.600L514.700 142.400"/>
</g>
<g fill="none" stroke="#333" stroke-width="1.5" stroke-linejoin="round">
<path d="M649.700 147.500L657.400 139.800V143.600H666V151.400H657.400V155.200Z"/>
<path d="M692.400 147.500L684.700 139.800V143.600H676V151.400H684.700V155.200Z"/>
<path d="M976.200 147.400L986 140V154.800Z"/><path d="M1013.300 147.400L1003.200 140V154.800Z"/>
</g>
<g fill="none" stroke="#111" stroke-width="2.100" stroke-linecap="round"><circle cx="714.500" cy="147.100" r="6.400"/><path d="M719.300 152L722.200 155.200M711.300 147.100H717.700M714.500 143.900V150.300"/></g>
<g fill="none" stroke="#333" stroke-width="1.500" stroke-linecap="round"><circle cx="740.800" cy="146.700" r="6.900"/><path d="M745.800 151.800L749.200 155.300M737.500 146.700H744.100"/></g>
<path d="M1025 140.400H1043M1025 154.500H1043" stroke="#333" stroke-width="1.100"/>
<text x="1033.900" y="151.700" font-family="Liberation Sans, sans-serif" font-size="11.500" font-weight="bold" fill="#333" text-anchor="middle" letter-spacing="-.5">Abi</text>
<g fill="none" stroke="#222" stroke-width="1.700" stroke-linejoin="round"><circle cx="1054.600" cy="150.500" r="3.600"/><circle cx="1065.700" cy="150.500" r="3.600"/><path d="M1051.100 149.500L1052.800 140.800Q1053 139.800 1054 139.800H1056.500Q1057.600 139.800 1057.600 140.800V147.500M1069.200 149.500L1067.500 140.800Q1067.300 139.800 1066.300 139.800H1063.800Q1062.700 139.800 1062.700 140.800V147.500M1057.600 142H1062.700M1057.600 145.800H1062.700"/></g>
</svg>
<div class="tx" style="left:94.500px">Page:</div>
<div class="box" style="left:138.500px;top:3px;width:49px;height:21px"></div>
<div class="tx" style="left:173.500px">1</div>
<div class="tx" style="left:190px">/2</div>
<div class="tx" style="left:320.500px">Lookup</div>
<div class="box" style="left:378px;top:3px;width:150px;height:21px"></div>

</div>
<div id="doc">
<div id="page">
<svg class="abs" style="left:0;top:0" width="948" height="676" viewBox="501 162 948 676" font-family="Liberation Mono, monospace">
<!-- watermarks -->
<g fill="#eaeaea" font-family="Liberation Sans, sans-serif" font-size="26.500" font-style="italic" text-anchor="middle">
<text transform="translate(735,326.300) rotate(-45)">XZZ@XZZHK</text>
<text transform="translate(1235,326.300) rotate(-45)">XZZ@XZZHK</text>
<text transform="translate(735,726.300) rotate(-45)">XZZ@XZZHK</text>
<text transform="translate(1235,726.300) rotate(-45)">XZZ@XZZHK</text>
</g>
<!-- frame -->
<g fill="none" stroke="#1c1c1c" stroke-width="1.4">
<rect x="539.1" y="200" width="872.2" height="616.4"/>
<path d="M691.2 181V200M833 181V200M975 181V200M1116.5 181V200M1258.3 181V200"/>
<path d="M691.2 816V835M833 816V835M975 816V835M1116.5 816V835M1258.3 816V835"/>
<path d="M520 284.2H539M520 396.2H539M520 508.2H539M520 620.2H539M520 732.2H539"/>
<path d="M1411 284.2H1430M1411 396.2H1430M1411 508.2H1430M1411 620.2H1430M1411 732.2H1430"/>
</g>
<g fill="#1c1c1c"><path d="M973 194L975 200L977 194Z"/><path d="M973 822L975 816L977 822Z"/><path d="M533 506.2L539 508.2L533 510.2Z"/><path d="M1417 506.2L1411 508.2L1417 510.2Z"/></g>
<g fill="#969696" font-family="Liberation Sans, sans-serif" font-size="10" text-anchor="middle">
<text x="616" y="189">1</text><text x="765" y="189">2</text><text x="907" y="189">3</text><text x="1048" y="189">4</text><text x="1190" y="189">5</text><text x="1332" y="189">6</text>
<text x="616" y="834">1</text><text x="765" y="834">2</text><text x="907" y="834">3</text><text x="1048" y="834">4</text><text x="1190" y="834">5</text><text x="1332" y="834">6</text>
<text x="530" y="240" textLength="5.300" lengthAdjust="spacingAndGlyphs">A</text><text x="530" y="340" textLength="5.300" lengthAdjust="spacingAndGlyphs">B</text><text x="530" y="452" textLength="5.300" lengthAdjust="spacingAndGlyphs">C</text><text x="530" y="564" textLength="5.300" lengthAdjust="spacingAndGlyphs">D</text><text x="530" y="676" textLength="5.300" lengthAdjust="spacingAndGlyphs">E</text><text x="530" y="775" textLength="5.300" lengthAdjust="spacingAndGlyphs">F</text>
<text x="1424" y="240" textLength="5.300" lengthAdjust="spacingAndGlyphs">A</text><text x="1424" y="340" textLength="5.300" lengthAdjust="spacingAndGlyphs">B</text><text x="1424" y="452" textLength="5.300" lengthAdjust="spacingAndGlyphs">C</text><text x="1424" y="564" textLength="5.300" lengthAdjust="spacingAndGlyphs">D</text><text x="1424" y="676" textLength="5.300" lengthAdjust="spacingAndGlyphs">E</text><text x="1424" y="775" textLength="5.300" lengthAdjust="spacingAndGlyphs">F</text>
</g>
<text x="975" y="164" font-size="4" fill="#999" text-anchor="middle">JOB FILE : 1B5</text>
<g fill="none" stroke="#96c2f2" stroke-width=".85" stroke-linejoin="round">
<rect x="683.5" y="304.3" width="99.3" height="33.3" rx="2.5"/>
<!-- top outline -->
<path d="M683.5 399.5V340.500H785L786.500 338.500H793V306.500H786.500V304.400H804.500L805.500 307Q806.500 309 807.500 307L808.500 304.400H821L823 307.100H849.500L851.500 304.400H886.500L887.500 307Q888.500 309 889.500 307L890.500 304.400H971.500L972.500 307Q973.500 309 974.500 307L975.500 304.400H979L981 307.100H1010L1012 304.400H1065L1066.500 307.100H1095.300V322Q1095.300 324 1097 325L1099 326.500V330"/>
<path d="M794.800 304.400V338.500M697 338V340.500M715 338V340.500M712 338V340.500M766 338V340.500M777 338V340.500"/>
<!-- right side pieces -->
<rect x="1098.400" y="304.200" width="7.100" height="58.200" rx="2.500"/>
<path d="M1099 326V330Q1099 333 1096 333H1095Q1093 331.500 1092 329H1089V360H1092V366H1101V362.500M1092.300 334.500V357L1095 360.500L1099 362.500M1100 326H1102.500V331M1098 362.500V366"/>
<path d="M1092.900 360V365.800H1105.700V371.700L1103.400 374H1097.500V388H1102.800L1103.400 390V397.500L1102.800 399.600H1097.500V413.600H1102.800L1103.400 415V425.300H1093.500L1092.300 423.500L1091 425.500L1086.500 426V435.800L1095.200 436.300L1097 438.700L1098.700 436.300H1103.400V439.800L1097 443.900H1091V447.600M1091 441V443.900M1096 443.900V447.600"/>
<!-- channel lower boundary of upper region -->
<path d="M683.500 399.500H725Q727.500 399.500 727.500 397V393.700Q727.500 391.200 730 391.200H797.800Q800.300 391.200 800.300 393.700V397Q800.300 399.500 802.800 399.500H852L854.500 396.200H866.500V392.500Q866.500 391 868 391H869Q870.500 391 870.500 392.500V396.200H893Q896.500 396.200 896.500 399.700V412Q896.500 417 901.500 417H958L961 413L963 410.200H977.500V382"/>
<path d="M693 399.500H697M727.500 402.500Q730.500 402.500 730.500 399.500V397Q730.500 394.500 733 394.500H795Q797.500 394.500 797.500 397V399.500Q797.500 402.500 800.500 402.500H853L855.500 399.200H892Q894 399.200 894 401.500V411.500Q894 414.700 898 414.700H914.500L916.500 412.500H958L960.500 410.200M759.500 391.200V394.500M768.500 391.200V394.500M788.500 391.200V394.500M793.500 391.200V394.500M842 399.500V402.500M883.500 396.200V399.200M893 396.200V399.200M962 410.200V414M969 410.200V413M975 389H977.500M975 400.500H977.500"/>
<path d="M725 402.500H722Q718 402.500 718 405V424M721 405.500V427"/>
<!-- big arc -->
<path d="M977.500 382A38.700 38.700 0 0 1 1054.400 376Q1055 385 1052 391.500L1047.400 403Q1045.300 407 1043.300 411.300Q1042.500 414 1044 416Q1046 420.200 1048.600 420.600L1055.600 421.200L1058.500 424.700H1065.500Q1068.400 425 1068.400 428.800V437"/>
<path d="M975 410.200V382A41.200 41.200 0 0 1 1014 340.500L1017 338Q1018.500 337 1019.500 338L1022.500 340.800L1025 338.500Q1027 337 1028.500 338.500L1031 341.500V343.500A41.200 41.200 0 0 1 1057.300 378Q1057.600 386 1053.200 392.600L1050.300 399.600L1046.800 409Q1045.500 412 1046.200 414.800Q1047 418 1049.700 418.300L1057.900 418.900L1059.700 421.800L1068.400 422.400Q1071.900 423 1071.900 427.600V437"/>
<path d="M1052 392H1055M1047.500 402.500H1050.500"/>
<!-- inner R shape -->
<path d="M989.100 419.400V378Q989.100 374.600 992.500 374.600H1013Q1016.500 374.600 1016.500 378V381.500Q1016.500 385 1013 385H1009.500V391Q1029 395 1039.300 408.400V437.500Q1039.300 441.600 1035.300 441.600H987.300Q983.300 441.600 983.300 437.600V424Q983.300 420.500 986.800 420H989.100"/>
<path d="M992.400 423.500V377.500H1011.500Q1013.800 377.500 1013.800 380Q1013.800 382.200 1011.500 382.200H1006.600V393.800Q1018 396 1027 402L1030 405.500Q1036.300 410 1036.300 413V434Q1036.300 436.300 1034.500 436.300H1032.800V419.400H1012.400V436.300H994L992 438.300H989Q986.800 438.300 986.800 436V426Q986.800 423.500 989.500 423.500H992.400"/>
<path d="M997.500 374.600V377.500M989.100 415H992.400M1036.300 414.500H1039.300M1036.300 424.500H1039.300M997.500 436.300V441.600M1005.500 436.300V441.600"/>
</g>
<g fill="none" stroke="#96c2f2" stroke-width=".85" stroke-linejoin="round">
<!-- fan inner arc + channel to the right -->
<path d="M721 427Q722 430 727 430.500Q736 431.300 742 433.500Q747.500 436 742 440A38.700 38.700 0 1 0 811.700 463.100V437Q811.700 433.600 815 433.600H824Q826 433.600 827 431.500Q828 429.500 830.500 429.500H889Q893.500 429.500 893.500 434V443.500Q893.500 447 897 447H933L935.500 444.200H987Q990 444.200 990.500 447Q991.500 452.600 997 452.600H1056.700Q1059 452.600 1060 450.300Q1061.500 446.500 1065.500 444.500Q1068.400 443.500 1068.400 441V437"/>
<path d="M811.700 442H814.500M811.700 452H814.500M893.500 434H897M893.500 441H897M905 447V449M936 444.200V447M946 444.200V447M995.500 452.600V455M1001 452.600V455M1020 452.600V455M1029 452.600V455M1068 432H1071M1068 438.500H1071"/>
<path d="M1071.900 437V440.400L1073 441H1091M1068.400 433H1071.900M1068.400 439H1071.900"/>
<!-- J pipe -->
<path d="M749 438V409Q749 405.300 752.700 405.300H802Q805.600 405.300 805.600 409V421Q805.600 424 802.500 424.500Q800.300 425 800.300 427.500V468Q800.300 472.300 796 472.300H779.500A5.300 5.300 0 0 1 776.500 461.800Q778 460.500 783 460.500V455.500Q770 453.500 761 448.500Q749 442.500 749 438Z"/>
<path d="M752.600 437V409.500H757V437Q757 441 763 445Q771 449.500 780 451.500Q786 452.500 786 456V460Q786 463 783 463H780A2.900 2.900 0 0 0 779.500 469H795.500Q797.300 469 797.300 467V427M757 420H777V427M776.800 426.800V410H801.800V421.500M783 405.300V410M791 405.300V410M749 432H752.600M791 469V472.300M797.300 430H800.300"/>
<!-- bottom-left blue -->
<path d="M690.500 483.500H686Q683.500 483.500 683.500 486V541.500H690.500V527L688.200 523V515.500Q688.200 512.500 691.500 512Q698 511 698 506V489Q698 483.500 690.500 483.500M688.200 516H690M688.200 521H690"/>
<!-- bottom-right rect -->
<rect x="1006.500" y="509.600" width="99.300" height="32.300" rx="2.500"/>
<path d="M1012 506.500V509.600M1022 506.500V509.600M1076 506.500V509.600M1086 506.500V509.600"/>
</g>
<g fill="none" stroke="#9c9c9c" stroke-width=".8" stroke-linejoin="round">
<!-- board outline -->
<path d="M692.500 401.500H697.500L699.500 404H714Q718.500 404 718.500 408V423Q718.500 426.500 723 427Q733 428 740 430.200Q746.500 432.500 741.300 437.300A41.300 41.300 0 0 0 756 501.300L757.500 503.800Q759 505.300 760.500 503.800L762 503.400L764 505.400Q765.500 506.400 767 505.400L768.500 504.600A41.300 41.300 0 0 0 814 463.500V441Q814 436 819 436H830Q832 436 833 434.500L834 433.600H889.700V445Q889.700 448.500 893 448.500H912.500V452.500Q912.500 455 915 455Q917.500 455 917.500 452.500V448.500H932L934.500 447H988.500V452Q988.500 455 991.500 455H1062.700V447.600H1105.500V506.400H1004L1003 504.500H999L998 507.500H997V540.500H1003V541.500H986.500A2.400 2.400 0 0 0 981.500 541.500H970L967 539H940L937.500 541.500H903A2.400 2.400 0 0 0 898 541.500H819A2.400 2.400 0 0 0 814 541.500H781L779 539.500H726.500L724.500 541.500H694.200V526L688.200 521.500V517H693Q700.300 517 700.300 512V490Q700.300 481.400 693 481.400H685V474.500"/>
<path d="M692.500 401.500L686 407.500V409.500H688V408.500H690V409.500H692V408.500H694V409.500H696V408.500H698V409.500H702.500V420H698V419H696V420H694V419H692V420H690V419H688V420H685.500V424"/>
<ellipse cx="689.500" cy="440" rx="5" ry="8"/><ellipse cx="689.500" cy="465" rx="5" ry="8"/>
<path d="M685 424V432M685 448V457M685 473V481.400"/>
<circle cx="692.300" cy="452.500" r="2.200"/><circle cx="856.400" cy="447.600" r="3"/><circle cx="814" cy="504" r="3"/><circle cx="949.700" cy="451" r="3"/><circle cx="983.600" cy="451.500" r="3"/><circle cx="1078.300" cy="456" r="3"/><circle cx="1017" cy="498" r="3"/><circle cx="941.800" cy="511.500" r="3"/><circle cx="1101.500" cy="477.500" r="2.300"/><circle cx="718.500" cy="426" r="1.300"/><circle cx="728.500" cy="490" r="1.600"/>
<rect x="1098" y="451.500" width="7" height="22.500" rx="1"/><path d="M1096.500 465V472"/>
<path d="M847.500 412H874L876.500 413.200L874 414.500H847.500Z"/>
<circle cx="754" cy="415" r="1.800"/><circle cx="783" cy="416.500" r="1.500"/><ellipse cx="800" cy="420.500" rx="1.700" ry="1.200"/><circle cx="778.500" cy="466" r="1.600"/>
</g>
<path fill="#111" d="M701.2 438.6h1.0v0.9h-1.0zM703.0 438.0h2.9v0.9h-2.9zM703.4 439.3h1.0v1.7h-1.0zM701.5 439.6h2.9v1.7h-2.9zM700.2 443.1h1.3v0.9h-1.3zM702.1 441.2h1.3v0.9h-1.3zM702.1 438.4h2.1v1.2h-2.1zM702.0 443.1h2.9v1.2h-2.9zM700.4 443.1h1.3v1.3h-1.3zM700.4 444.6h2.9v0.9h-2.9zM702.3 442.3h2.9v1.7h-2.9zM702.9 442.0h2.1v1.3h-2.1zM701.1 445.5h1.3v0.9h-1.3zM702.1 442.6h1.3v1.7h-1.3zM701.1 447.5h1.0v1.7h-1.0zM700.6 440.7h2.1v1.7h-2.1zM700.1 464.5h2.6v1.2h-2.6zM700.6 462.4h1.9v1.6h-1.9zM700.1 460.6h1.2v1.6h-1.2zM701.3 460.4h1.2v1.6h-1.2zM700.5 462.6h1.2v0.8h-1.2zM701.7 462.4h2.6v0.8h-2.6zM697.6 442.7h0.8v0.7h-0.8zM697.9 443.3h1.3v0.6h-1.3zM709.8 482.3h1.2v1.1h-1.2zM712.9 485.0h1.2v1.6h-1.2zM713.7 484.0h1.9v1.1h-1.9zM709.7 481.0h1.2v1.1h-1.2zM709.1 484.8h1.2v1.2h-1.2zM710.4 480.8h2.6v1.2h-2.6zM711.9 481.8h1.2v0.8h-1.2zM711.2 485.1h2.6v1.6h-2.6zM710.9 482.3h1.9v1.6h-1.9zM713.4 474.5h0.7v0.9h-0.7zM714.0 476.5h0.6v0.5h-0.6zM713.0 475.1h0.6v0.7h-0.6zM719.1 507.0h1.5v2.0h-1.5zM711.5 509.7h1.5v1.5h-1.5zM716.8 507.7h2.4v2.0h-2.4zM716.9 510.5h1.5v1.0h-1.5zM721.4 516.7h2.4v1.4h-2.4zM717.5 509.0h3.3v1.5h-3.3zM711.4 513.9h1.2v1.5h-1.2zM725.1 518.5h1.5v1.5h-1.5zM724.0 511.2h1.5v1.5h-1.5zM719.5 514.9h1.5v1.4h-1.5zM722.5 516.7h1.5v1.4h-1.5zM717.5 511.2h1.2v1.0h-1.2zM722.0 512.8h1.5v1.5h-1.5zM716.4 519.6h1.5v1.5h-1.5zM710.3 507.5h2.4v1.4h-2.4zM714.6 513.0h3.3v1.0h-3.3zM716.9 515.5h1.2v1.0h-1.2zM724.0 517.3h1.5v2.0h-1.5zM723.7 512.3h1.5v1.0h-1.5zM722.2 520.1h2.4v2.0h-2.4zM715.6 519.7h1.5v1.4h-1.5zM725.4 506.4h3.3v2.0h-3.3zM722.3 508.1h3.3v2.0h-3.3zM719.8 511.1h3.3v1.4h-3.3zM709.4 517.6h1.2v1.4h-1.2zM716.2 518.6h1.5v1.0h-1.5zM713.2 510.2h1.5v1.5h-1.5zM713.3 512.1h1.5v1.0h-1.5zM724.0 511.1h2.4v2.0h-2.4zM722.6 518.7h1.5v1.4h-1.5zM717.6 506.3h2.4v1.4h-2.4zM719.0 517.3h1.5v1.4h-1.5zM711.3 515.0h1.2v1.0h-1.2zM714.4 513.5h3.3v2.0h-3.3zM721.9 507.5h3.3v1.0h-3.3zM713.1 510.0h1.2v2.0h-1.2zM718.3 517.0h1.2v2.0h-1.2zM714.4 520.1h3.3v1.4h-3.3zM720.4 512.6h3.3v2.0h-3.3zM717.4 509.6h3.3v1.5h-3.3zM724.2 518.9h1.5v2.0h-1.5zM711.3 507.8h2.4v1.5h-2.4zM710.2 509.5h1.2v1.4h-1.2zM720.0 517.4h1.5v1.5h-1.5zM711.4 518.8h2.4v1.4h-2.4zM721.3 507.4h2.4v1.4h-2.4zM725.3 518.1h1.5v2.0h-1.5zM725.4 511.9h2.4v1.4h-2.4zM714.9 507.3h1.5v1.0h-1.5zM714.6 512.7h1.2v2.0h-1.2zM714.5 515.0h3.3v1.0h-3.3zM710.9 519.3h1.5v1.0h-1.5zM710.4 509.9h1.5v1.5h-1.5zM721.5 517.9h1.5v2.0h-1.5zM711.5 519.3h3.3v2.0h-3.3zM712.9 505.1h0.8v0.9h-0.8zM711.0 505.1h0.8v0.7h-0.8zM713.6 505.1h1.0v0.7h-1.0zM730.6 529.5h0.9v1.1h-0.9zM734.9 530.6h1.1v1.0h-1.1zM729.3 531.8h0.9v1.0h-0.9zM730.5 529.7h1.1v1.1h-1.1zM732.1 529.8h1.8v1.0h-1.8zM730.6 532.1h1.1v0.8h-1.1zM716.2 531.6h1.5v0.6h-1.5zM721.8 528.5h1.1v0.5h-1.1zM723.4 531.1h1.1v0.9h-1.1zM727.0 528.9h0.7v0.6h-0.7zM719.9 532.2h0.7v0.9h-0.7zM727.2 533.2h0.7v0.5h-0.7zM696.4 530.7h0.7v0.9h-0.7zM696.9 526.5h1.1v0.7h-1.1zM699.2 530.4h0.6v0.9h-0.6zM697.0 527.7h0.6v0.7h-0.6zM706.9 454.8h1.5v0.7h-1.5zM706.3 456.2h0.7v0.6h-0.7zM841.9 471.0h2.1v0.9h-2.1zM843.5 478.4h1.3v1.2h-1.3zM843.9 471.1h1.3v0.9h-1.3zM839.0 479.6h2.1v0.9h-2.1zM841.1 480.3h1.0v1.2h-1.0zM846.0 481.5h2.9v1.7h-2.9zM847.5 481.6h2.1v1.2h-2.1zM840.9 480.1h1.3v0.9h-1.3zM848.3 481.5h2.9v1.7h-2.9zM847.1 482.9h1.3v0.9h-1.3zM848.3 479.6h1.3v0.9h-1.3zM837.4 473.0h1.3v0.9h-1.3zM842.2 477.6h1.0v0.9h-1.0zM845.6 481.0h2.1v1.3h-2.1zM837.0 482.7h2.9v0.9h-2.9zM846.0 472.0h2.1v1.3h-2.1zM848.1 483.4h1.3v1.2h-1.3zM840.2 480.6h2.1v1.7h-2.1zM848.6 472.1h1.3v0.9h-1.3zM845.5 480.4h1.0v1.2h-1.0zM841.5 480.6h1.3v1.2h-1.3zM837.2 471.9h1.3v0.9h-1.3zM846.5 480.9h1.3v1.3h-1.3zM843.4 477.9h1.0v1.2h-1.0zM841.3 472.3h2.1v0.9h-2.1zM841.0 472.1h2.9v1.7h-2.9zM850.6 476.7h1.3v0.9h-1.3zM845.0 473.1h2.9v1.3h-2.9zM864.2 476.5h2.6v1.2h-2.6zM863.5 478.7h1.2v1.6h-1.2zM863.6 477.8h1.0v1.1h-1.0zM853.0 477.9h1.9v1.6h-1.9zM856.6 476.5h1.2v1.6h-1.2zM856.7 479.2h1.0v1.2h-1.0zM861.9 479.2h1.0v1.1h-1.0zM861.4 479.4h1.2v1.2h-1.2zM857.4 477.5h2.6v0.8h-2.6zM871.1 474.7h1.4v1.0h-1.4zM869.5 471.4h1.4v1.3h-1.4zM868.9 473.3h3.1v1.4h-3.1zM867.7 474.2h2.2v1.0h-2.2zM879.9 476.4h3.1v1.3h-3.1zM878.1 471.4h2.2v1.8h-2.2zM876.1 472.2h1.4v1.8h-1.4zM865.0 479.0h1.4v1.3h-1.4zM873.3 474.0h1.4v1.4h-1.4zM878.5 479.4h1.4v1.8h-1.4zM876.9 473.6h3.1v1.8h-3.1zM866.3 476.5h1.1v1.3h-1.1zM873.8 478.0h3.1v1.3h-3.1zM872.9 473.9h2.2v1.8h-2.2zM866.7 472.7h1.1v1.3h-1.1zM870.7 471.8h1.4v1.4h-1.4zM869.1 475.9h1.1v1.8h-1.1zM871.5 477.4h1.4v1.8h-1.4zM869.3 477.5h2.2v1.4h-2.2zM875.3 474.1h3.1v1.3h-3.1zM865.8 478.7h2.2v1.8h-2.2zM876.7 474.7h1.4v1.0h-1.4zM866.5 474.7h2.2v1.8h-2.2zM864.0 474.4h3.1v1.8h-3.1zM883.1 473.1h1.1v1.3h-1.1zM867.0 475.5h1.1v1.8h-1.1zM865.7 477.7h1.1v1.3h-1.1zM868.6 478.9h1.4v1.3h-1.4zM876.3 475.5h2.2v1.0h-2.2zM865.9 473.6h3.1v1.3h-3.1zM871.6 472.9h3.1v1.0h-3.1zM864.2 473.6h2.2v1.4h-2.2zM882.8 476.5h1.4v1.8h-1.4zM874.3 475.7h1.1v1.8h-1.1zM875.9 491.0h1.3v1.4h-1.3zM872.7 492.3h2.6v1.1h-2.6zM869.0 492.3h1.6v1.4h-1.6zM872.6 492.4h2.6v1.6h-2.6zM875.5 490.7h1.6v1.1h-1.6zM868.2 493.3h1.6v1.4h-1.6zM868.6 490.8h1.6v1.1h-1.6zM879.7 491.7h1.6v1.4h-1.6zM872.5 493.1h1.3v1.4h-1.3zM879.2 490.2h1.3v1.4h-1.3zM871.4 492.4h1.6v2.1h-1.6zM871.9 492.4h1.6v1.1h-1.6zM880.4 493.2h1.6v1.4h-1.6zM867.9 493.2h2.6v1.1h-2.6zM869.8 492.5h1.6v1.6h-1.6zM871.8 490.4h1.3v1.6h-1.3zM866.2 491.4h1.3v1.4h-1.3zM870.9 492.6h1.6v2.1h-1.6zM866.4 492.4h1.6v1.6h-1.6zM873.3 491.5h1.6v1.6h-1.6zM888.4 491.2h2.1v1.2h-2.1zM889.1 493.1h1.0v1.7h-1.0zM882.3 488.4h1.0v1.3h-1.0zM883.7 488.4h2.9v1.3h-2.9zM885.2 490.2h2.9v0.9h-2.9zM884.3 492.8h1.3v1.3h-1.3zM884.6 492.8h2.9v0.9h-2.9zM882.2 489.6h2.1v1.7h-2.1zM890.3 490.6h1.3v1.7h-1.3zM889.1 488.9h2.1v1.2h-2.1zM882.1 494.2h1.3v1.2h-1.3zM887.3 490.2h1.3v1.7h-1.3zM885.1 493.2h1.0v1.2h-1.0zM885.4 489.1h2.1v0.9h-2.1zM896.4 490.5h1.5v0.7h-1.5zM893.9 490.0h0.6v0.5h-0.6zM894.4 486.8h0.6v0.9h-0.6zM895.6 492.6h1.1v0.6h-1.1zM848.2 495.8h2.2v0.9h-2.2zM866.7 497.8h0.8v1.0h-0.8zM876.3 497.6h1.0v1.0h-1.0zM821.0 522.0h1.2v1.1h-1.2zM815.6 521.7h2.6v1.1h-2.6zM816.5 522.9h1.2v1.1h-1.2zM820.0 521.5h1.9v0.8h-1.9zM814.1 523.3h1.2v1.6h-1.2zM822.9 521.2h1.2v1.1h-1.2zM814.3 521.9h2.6v1.1h-2.6zM823.0 522.8h1.2v1.6h-1.2zM819.5 524.7h1.0v0.8h-1.0zM819.9 524.4h1.2v1.1h-1.2zM813.4 522.6h1.0v1.1h-1.0zM831.9 523.1h1.1v0.8h-1.1zM830.8 523.8h1.1v1.0h-1.1zM829.7 523.1h0.9v1.4h-0.9zM829.2 523.1h0.9v1.4h-0.9zM843.2 520.9h2.6v0.8h-2.6zM843.1 522.3h1.2v1.6h-1.2zM846.7 523.9h1.9v0.8h-1.9zM839.4 523.3h1.2v1.6h-1.2zM840.5 525.0h1.2v1.1h-1.2zM840.2 522.3h1.0v1.6h-1.0zM845.7 522.5h1.0v1.6h-1.0zM842.2 522.1h1.2v1.1h-1.2zM836.2 523.2h1.9v0.8h-1.9zM842.2 525.4h2.6v1.1h-2.6zM837.6 521.6h2.6v1.1h-2.6zM866.0 520.6h1.9v1.1h-1.9zM859.3 524.9h1.0v1.6h-1.0zM859.4 523.5h1.9v0.8h-1.9zM865.8 523.6h1.2v1.1h-1.2zM862.7 523.6h1.2v1.6h-1.2zM858.0 521.3h1.9v1.1h-1.9zM860.1 520.7h1.2v1.1h-1.2zM856.4 523.3h1.0v1.2h-1.0zM857.3 523.5h2.6v1.2h-2.6zM883.9 522.8h1.3v1.7h-1.3zM880.3 523.1h2.9v1.7h-2.9zM877.4 521.0h2.1v1.7h-2.1zM878.2 525.4h2.1v1.2h-2.1zM886.1 523.3h1.0v1.2h-1.0zM879.9 523.1h2.1v0.9h-2.1zM875.6 521.7h1.3v0.9h-1.3zM875.7 523.9h2.1v1.2h-2.1zM875.4 521.4h2.9v0.9h-2.9zM877.7 526.6h2.1v1.3h-2.1zM888.1 526.2h1.3v1.2h-1.3zM875.9 523.0h1.3v1.2h-1.3zM879.4 524.5h2.1v1.2h-2.1zM878.5 526.5h2.1v1.2h-2.1zM872.1 437.4h1.1v1.1h-1.1zM870.6 435.8h1.8v1.0h-1.8zM872.4 436.1h1.1v1.4h-1.1zM869.2 438.1h0.9v0.8h-0.9zM872.4 436.4h1.8v0.8h-1.8zM768.4 505.0h1.0v0.6h-1.0zM768.6 509.3h1.3v0.5h-1.3zM770.3 507.2h1.0v0.5h-1.0zM767.1 507.0h0.5v0.6h-0.5zM778.3 502.4h1.3v0.6h-1.3zM776.8 507.0h0.6v0.5h-0.6zM788.7 501.3h1.1v0.7h-1.1zM794.3 498.7h0.7v0.5h-0.7zM786.2 498.0h0.7v0.7h-0.7zM737.0 493.4h0.6v0.8h-0.6zM741.5 495.5h0.6v0.6h-0.6zM741.9 494.5h0.6v0.4h-0.6zM744.8 492.3h0.6v0.8h-0.6zM736.9 496.0h0.6v0.8h-0.6zM766.8 524.0h0.8v1.0h-0.8zM1048.9 479.6h2.9v1.7h-2.9zM1039.6 486.6h1.0v0.9h-1.0zM1047.2 475.8h1.3v1.2h-1.3zM1034.6 483.9h1.0v1.2h-1.0zM1036.8 471.3h2.9v1.7h-2.9zM1054.7 470.8h1.3v0.9h-1.3zM1041.0 468.1h2.1v0.9h-2.1zM1043.0 476.5h2.1v0.9h-2.1zM1052.8 476.8h1.3v0.9h-1.3zM1040.0 481.0h1.0v1.3h-1.0zM1056.8 487.1h1.3v0.9h-1.3zM1040.1 479.0h2.1v1.3h-2.1zM1040.9 487.1h1.3v0.9h-1.3zM1056.5 467.3h1.3v1.2h-1.3zM1055.5 471.4h1.3v1.3h-1.3zM1038.1 475.4h2.9v1.2h-2.9zM1043.1 485.5h2.9v1.7h-2.9zM1045.6 478.5h1.0v0.9h-1.0zM1044.7 482.7h2.9v1.3h-2.9zM1054.1 475.5h2.9v0.9h-2.9zM1048.1 470.7h1.0v0.9h-1.0zM1036.0 480.5h1.3v1.3h-1.3zM1059.1 482.2h1.0v0.9h-1.0zM1036.7 481.0h1.0v0.9h-1.0zM1052.7 468.4h2.9v1.3h-2.9zM1038.3 487.7h2.9v0.9h-2.9zM1056.5 483.4h2.1v0.9h-2.1zM1039.6 471.4h1.0v0.9h-1.0zM1058.3 486.8h1.0v1.3h-1.0zM1045.7 469.9h1.3v1.3h-1.3zM1041.5 476.2h1.0v1.3h-1.0zM1039.9 473.1h1.3v1.3h-1.3zM1053.5 480.1h2.1v1.3h-2.1zM1049.5 467.7h2.1v0.9h-2.1zM1044.7 483.8h1.3v1.7h-1.3zM1051.8 478.7h1.3v0.9h-1.3zM1048.3 473.2h2.1v0.9h-2.1zM1047.0 473.3h1.0v0.9h-1.0zM1042.3 469.1h1.3v1.7h-1.3zM1048.8 487.8h2.9v1.3h-2.9zM1048.4 470.4h1.3v1.2h-1.3zM1046.3 469.4h1.0v1.7h-1.0zM1054.0 482.1h1.0v1.3h-1.0zM1042.5 475.7h2.1v0.9h-2.1zM1044.3 481.0h1.3v1.2h-1.3zM1041.1 476.3h2.9v1.2h-2.9zM1043.1 486.2h1.3v1.7h-1.3zM1036.4 479.9h2.9v0.9h-2.9zM1042.3 474.1h1.3v1.7h-1.3zM1050.7 483.1h1.3v1.7h-1.3zM1044.7 483.8h2.9v1.2h-2.9zM1036.4 477.0h1.3v1.2h-1.3zM1040.1 483.4h2.9v1.2h-2.9zM1052.3 488.2h1.3v1.3h-1.3zM1037.3 474.1h1.3v1.3h-1.3zM1059.0 482.8h1.0v1.2h-1.0zM1058.7 469.2h2.1v1.2h-2.1zM1059.3 484.2h1.3v1.7h-1.3zM1040.3 469.4h1.0v1.3h-1.0zM1038.5 475.4h1.0v0.9h-1.0zM1043.7 484.2h1.3v1.3h-1.3zM1045.4 470.1h2.9v1.7h-2.9zM1040.0 467.2h1.9v1.6h-1.9zM1045.8 469.2h2.6v1.1h-2.6zM1044.6 469.1h1.9v1.6h-1.9zM1042.1 469.0h1.0v1.6h-1.0zM1041.6 467.9h1.2v1.2h-1.2zM1045.8 468.3h1.0v1.6h-1.0zM1043.5 469.2h1.2v1.2h-1.2zM1045.3 467.9h1.9v0.8h-1.9zM1052.3 471.1h1.2v1.1h-1.2zM1055.5 469.4h2.6v1.6h-2.6zM1055.7 471.7h2.6v0.8h-2.6zM1056.3 472.2h2.6v1.2h-2.6zM1054.8 472.6h1.2v1.1h-1.2zM1054.7 471.9h1.0v1.2h-1.0zM1084.8 463.5h1.8v1.4h-1.8zM1075.0 462.4h1.8v1.1h-1.8zM1083.8 462.6h1.1v1.4h-1.1zM1089.9 465.1h1.1v1.4h-1.1zM1081.8 463.0h0.9v1.0h-0.9zM1081.9 465.3h1.1v1.0h-1.1zM1080.0 465.8h1.8v1.4h-1.8zM1090.8 466.5h1.1v1.4h-1.1zM1080.0 467.0h1.1v1.4h-1.1zM1085.6 467.8h1.1v1.4h-1.1zM1074.0 466.3h1.1v1.1h-1.1zM1078.1 463.8h1.8v1.4h-1.8zM1081.2 465.8h1.1v1.0h-1.1zM1089.7 467.0h0.9v0.8h-0.9zM1088.0 467.3h1.1v1.1h-1.1zM1083.4 474.1h0.9v1.0h-0.9zM1088.2 477.2h1.1v0.8h-1.1zM1082.6 478.2h1.1v1.4h-1.1zM1079.2 474.7h1.8v1.0h-1.8zM1083.1 477.4h0.9v1.1h-0.9zM1076.9 477.4h2.4v0.8h-2.4zM1085.1 476.1h0.9v0.8h-0.9zM1077.9 475.1h1.1v1.4h-1.1zM1081.3 474.3h1.8v1.0h-1.8zM1084.4 475.2h1.1v0.8h-1.1zM1076.4 475.6h2.4v1.4h-2.4zM1085.0 486.5h1.0v1.3h-1.0zM1080.5 486.9h0.8v0.9h-0.8zM1084.5 485.9h0.8v0.7h-0.8zM1084.0 486.0h1.0v0.7h-1.0zM1082.2 485.5h1.0v0.7h-1.0zM1076.8 485.2h1.0v1.0h-1.0zM1074.7 486.0h1.0v1.3h-1.0zM1087.0 485.7h1.0v1.0h-1.0zM1080.5 494.1h2.4v0.8h-2.4zM1086.3 493.4h1.8v1.4h-1.8zM1079.0 496.8h2.4v1.1h-2.4zM1088.5 495.2h0.9v1.1h-0.9zM1076.9 495.5h1.1v0.8h-1.1zM1085.7 492.2h2.4v1.4h-2.4zM1082.1 492.2h1.1v0.8h-1.1zM1074.1 492.9h1.8v0.8h-1.8zM1085.8 496.5h2.4v1.4h-2.4zM1083.2 495.1h2.4v0.8h-2.4zM1077.2 495.3h1.8v1.0h-1.8zM1093.4 493.6h1.0v1.6h-1.0zM1095.9 500.0h1.0v1.2h-1.0zM1096.3 493.2h1.2v1.2h-1.2zM1096.3 493.6h1.0v1.2h-1.0zM1093.1 497.0h2.6v0.8h-2.6zM1094.9 496.6h1.0v1.6h-1.0zM1095.2 500.1h1.9v0.8h-1.9zM1093.1 495.4h2.6v1.1h-2.6zM1094.8 495.6h1.0v0.8h-1.0zM1095.4 493.9h1.2v0.8h-1.2zM1088.8 449.0h0.6v0.6h-0.6zM1086.4 449.4h1.3v0.6h-1.3zM1087.1 450.8h1.3v0.7h-1.3zM1094.3 450.2h0.8v0.6h-0.8zM1087.3 450.8h1.3v1.0h-1.3zM963.4 524.6h0.8v0.7h-0.8zM956.1 513.2h2.2v0.7h-2.2zM960.3 517.1h2.2v0.9h-2.2zM966.5 523.9h2.2v0.7h-2.2zM959.5 525.3h1.6v1.3h-1.6zM963.4 514.9h0.8v1.0h-0.8zM966.5 515.1h1.6v1.3h-1.6zM960.2 523.2h1.0v1.0h-1.0zM959.2 513.8h2.2v1.0h-2.2zM965.6 522.4h0.8v0.9h-0.8zM962.6 517.0h1.6v0.9h-1.6zM960.1 521.9h2.2v0.9h-2.2zM964.9 516.7h0.8v1.0h-0.8zM991.6 462.5h1.8v0.6h-1.8zM991.8 462.2h1.8v0.7h-1.8zM907.8 489.9h1.8v1.0h-1.8zM908.5 467.5h1.8v1.0h-1.8zM913.1 470.9h0.8v0.8h-0.8zM911.2 484.8h1.3v0.7h-1.3zM914.4 482.1h0.6v1.0h-0.6zM909.7 467.6h0.8v0.6h-0.8zM907.4 481.9h0.8v0.8h-0.8zM909.9 482.2h0.8v0.7h-0.8zM892.7 483.5h0.8v0.8h-0.8zM898.2 486.9h1.8v0.7h-1.8zM893.5 497.7h1.3v0.8h-1.3zM902.3 487.1h1.3v0.6h-1.3zM892.2 491.5h0.8v0.8h-0.8zM897.4 480.4h0.6v0.7h-0.6zM904.1 496.6h1.3v0.7h-1.3zM893.7 495.0h1.3v0.6h-1.3zM943.7 464.4h2.6v1.1h-2.6zM942.5 463.1h1.2v1.1h-1.2zM970.7 500.1h0.9v1.1h-0.9zM958.7 505.5h0.8v1.3h-0.8zM906.9 512.8h0.7v0.9h-0.7zM911.7 517.3h0.7v1.2h-0.7zM945.4 518.9h0.9v0.8h-0.9zM911.3 535.3h0.6v0.7h-0.6zM911.1 535.1h1.5v0.5h-1.5zM928.1 535.1h1.5v0.9h-1.5zM922.4 535.2h0.6v0.6h-0.6zM926.9 535.4h1.5v0.9h-1.5zM1069.5 450.1h1.0v1.0h-1.0zM1088.3 459.4h1.3v1.0h-1.3zM1087.9 459.8h0.8v0.6h-0.8zM705.5 423.0h0.6v0.6h-0.6zM707.1 420.7h1.5v0.7h-1.5zM708.9 401.2h1.1v0.5h-1.1zM709.1 401.5h0.6v0.5h-0.6z"/>

<g fill="none" stroke="#1c1c1c" stroke-width="1">
<path d="M1284.500 200V254.500H1411.300M1284.500 206.700H1411M1284.500 213.500H1411M1284.500 220.400H1411M1284.500 227.300H1411M1284.500 234.100H1411M1284.500 240.800H1411M1284.500 247.600H1411M1301 206.700V254.500M1367.500 206.700V254.500"/>
<path d="M1231.700 816.200V771.500H1411.300M1231.700 779.500H1411M1143.500 816.200V786.600H1411M1143.500 794.100H1411M1143.500 801.300H1321.500M1231.700 808.700H1321.500M1276.200 771.500V816.200M1321.500 771.500V816.200M1366.800 771.500V786.600M1248.400 801.300V816.200M1304.700 801.300V816.200M1166.400 786.600V816.200"/>
</g>
<g fill="#666" font-size="4.600" style="white-space:pre">
<text x="1346.700" y="205.100" text-anchor="middle" textLength="18.5" lengthAdjust="spacingAndGlyphs">VERSIONS</text>
<text x="1289.800" y="212" textLength="6.9" lengthAdjust="spacingAndGlyphs">VER</text><text x="1305.700" y="212" textLength="18.5" lengthAdjust="spacingAndGlyphs">DESIGNER</text><text x="1373.500" y="212" textLength="9.2" lengthAdjust="spacingAndGlyphs">DATE</text>
<text x="1292.500" y="218.900" textLength="2.3" lengthAdjust="spacingAndGlyphs">A</text><text x="1311" y="218.900" textLength="37.0" lengthAdjust="spacingAndGlyphs">LOUYING 00474206</text><text x="1382" y="218.500" textLength="23.1" lengthAdjust="spacingAndGlyphs">2018-12-05</text>
<text x="1292.500" y="225.700" textLength="2.3" lengthAdjust="spacingAndGlyphs">B</text><text x="1311" y="225.700" textLength="34.6" lengthAdjust="spacingAndGlyphs">LiChao 00185500</text><text x="1382" y="225.300" textLength="23.1" lengthAdjust="spacingAndGlyphs">2018-12-20</text>
<text x="1292.500" y="232.500" textLength="2.3" lengthAdjust="spacingAndGlyphs">C</text><text x="1311" y="232.500" textLength="34.6" lengthAdjust="spacingAndGlyphs">LiChao 00185500</text><text x="1382" y="232.100" textLength="23.1" lengthAdjust="spacingAndGlyphs">2019-01-30</text>
<text x="1292.500" y="239.400" textLength="2.3" lengthAdjust="spacingAndGlyphs">D</text><text x="1292.500" y="246.200" textLength="2.3" lengthAdjust="spacingAndGlyphs">E</text><text x="1292.500" y="253" textLength="2.3" lengthAdjust="spacingAndGlyphs">F</text>
<text x="1237.200" y="777.500" textLength="23.1" lengthAdjust="spacingAndGlyphs">BOARD NAME</text><text x="1281.400" y="777.300" textLength="27.7" lengthAdjust="spacingAndGlyphs">SP2MACHRW19M</text><text x="1331.400" y="777.500" textLength="9.2" lengthAdjust="spacingAndGlyphs">DATE</text><text x="1371.300" y="777.800" textLength="23.1" lengthAdjust="spacingAndGlyphs">2019-01-30</text>
<text x="1237.200" y="785" textLength="25.4" lengthAdjust="spacingAndGlyphs">DRAWING NO.</text><text x="1281.400" y="785" textLength="32.3" lengthAdjust="spacingAndGlyphs">03011NEA_CAM14</text><text x="1331.400" y="785" textLength="16.2" lengthAdjust="spacingAndGlyphs">ECA NO.</text><text x="1378.400" y="784.600" font-weight="bold" textLength="4.6" lengthAdjust="spacingAndGlyphs">NA</text>
<text x="1237.200" y="792.500" textLength="23.1" lengthAdjust="spacingAndGlyphs">SPELL MODE</text><text x="1288.500" y="792.300" textLength="6.9" lengthAdjust="spacingAndGlyphs">1*2</text><text x="1351.400" y="792.300" textLength="27.7" lengthAdjust="spacingAndGlyphs">SHEET 1 OF 2</text>
<text x="1237.200" y="800" textLength="27.7" lengthAdjust="spacingAndGlyphs">OPEN WINDOWS</text><text x="1295.400" y="799.500" textLength="2.3" lengthAdjust="spacingAndGlyphs">4</text>
<text x="1233.300" y="807" textLength="6.9" lengthAdjust="spacingAndGlyphs">VER</text><text x="1250.700" y="807" textLength="18.5" lengthAdjust="spacingAndGlyphs">PART NO.</text><text x="1281" y="807" textLength="11.6" lengthAdjust="spacingAndGlyphs">SCALE</text><text x="1307.200" y="807" textLength="9.2" lengthAdjust="spacingAndGlyphs">SIZE</text>
<text x="1237.600" y="814.800" textLength="2.3" lengthAdjust="spacingAndGlyphs">C</text><text x="1249.700" y="814.800" textLength="18.5" lengthAdjust="spacingAndGlyphs">03025YEA</text><text x="1285.200" y="814.800" textLength="6.9" lengthAdjust="spacingAndGlyphs">1:1</text><text x="1308.500" y="814.800" textLength="4.6" lengthAdjust="spacingAndGlyphs">A2</text>
<text x="1346.300" y="808.900" textLength="43.9" lengthAdjust="spacingAndGlyphs">HUAWEI TECH CO.,LTD</text>
<text x="1145.700" y="792.300" textLength="18.5" lengthAdjust="spacingAndGlyphs">DESIGNER</text><text x="1171.800" y="792.300" textLength="37.0" lengthAdjust="spacingAndGlyphs">Li Chao 00185500</text>
<text x="1145.700" y="799.700" textLength="13.9" lengthAdjust="spacingAndGlyphs">E-MAIL</text><text x="1174.200" y="799.700" textLength="46.2" lengthAdjust="spacingAndGlyphs">lichao521@huawei.com</text>
<text x="1145.700" y="809.900" textLength="6.9" lengthAdjust="spacingAndGlyphs">TEL</text><text x="1176.600" y="810.900" textLength="25.4" lengthAdjust="spacingAndGlyphs">13377342057</text>
</g>

<text x="910.400" y="582" font-size="5.2" fill="#666" text-anchor="middle" letter-spacing=".6">SP2MACHRW19M VER.C SILKSCREEN TOP</text>
</svg>

</div>
<div id="dsb"><svg class="abs" style="left:0;top:0" width="13" height="678" viewBox="0 0 13 678"><path d="M2.200 10.800L6.500 6.500L10.800 10.800" fill="none" stroke="#333" stroke-width="1.200"/><rect x="1.500" y="13" width="10" height="324" rx="5" fill="#666"/><path d="M2.200 675.300L6.500 679.600L10.800 675.300" fill="none" stroke="#333" stroke-width="1.200"/></svg></div>
</div>
</div>
<div class="abs" id="c1" style="left:0;top:0;width:1px;height:1px;background:#000;z-index:5"></div><div class="abs" style="left:1522px;top:0;width:1px;height:1px;background:#000;z-index:5"></div>
<div id="status"><span>XZZ Schematics https://www.xzztools.com</span></div>
</body>
</html>
